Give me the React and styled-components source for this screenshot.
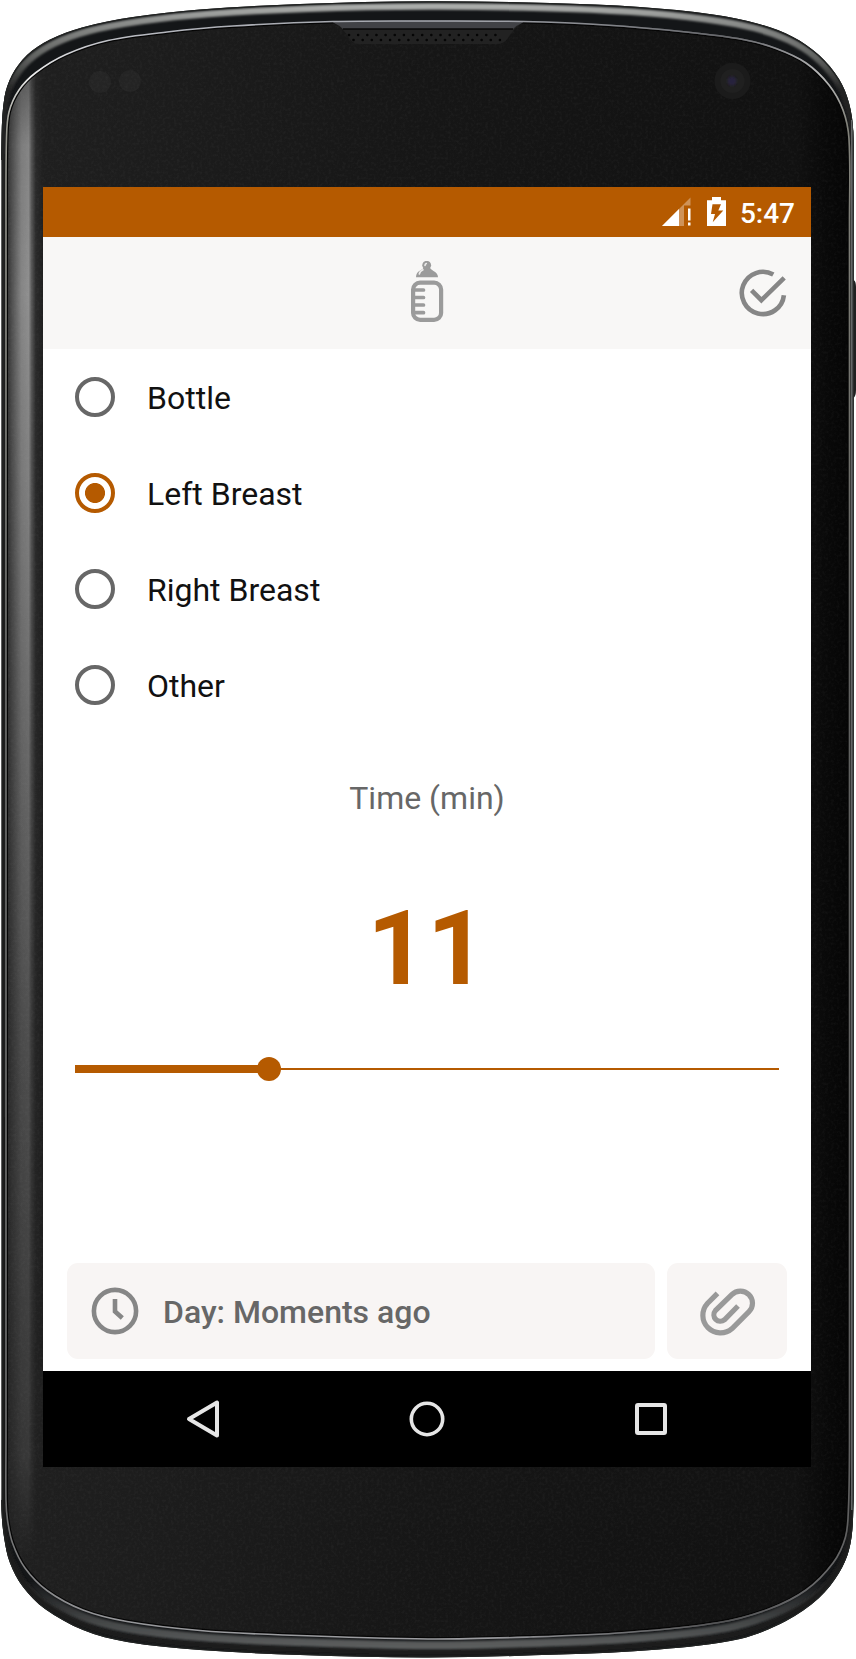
import React, { useState } from 'react';
import styled, { createGlobalStyle, ThemeProvider } from 'styled-components';

const theme = {
  accent: '#b55a00',
  bar: '#f8f7f6',
  card: '#f8f5f4',
  text: '#111111',
  muted: '#676767',
};

const GlobalStyle = createGlobalStyle`
  * { box-sizing: border-box; }
  body { margin: 0; background: #fff; font-family: Roboto, "Liberation Sans", sans-serif; }
`;

const Phone = styled.main`
  display: grid;
  width: 856px;
  height: 1659px;
  overflow: hidden;
`;

const FrameArt = styled.svg`
  grid-area: 1 / 1;
  display: block;
`;

const Screen = styled.section`
  grid-area: 1 / 1;
  z-index: 1;
  margin: 187px 0 0 43px;
  width: 768px;
  height: 1280px;
  display: flex;
  flex-direction: column;
  background: #fff;
`;

const StatusBar = styled.header`
  height: 50px;
  padding-right: 16px;
  display: flex;
  align-items: center;
  justify-content: flex-end;
  background: ${({ theme }) => theme.accent};
  color: #fff;
`;

const StatusIcons = styled.div`
  display: flex;
  gap: 16px;
`;

const Clock = styled.time`
  margin-left: 14px;
  font-size: 28px;
  font-weight: 500;
  line-height: 50px;
  padding-top: 3px;
`;

const AppBar = styled.div`
  height: 112px;
  display: grid;
  grid-template-columns: 96px 1fr 96px;
  align-items: center;
  justify-items: center;
  background: ${({ theme }) => theme.bar};
`;

const IconButton = styled.button`
  grid-column: ${({ $column }) => $column};
  display: flex;
  padding: 0;
  border: 0;
  background: none;
`;

const Content = styled.div`
  flex: 1;
  display: flex;
  flex-direction: column;
`;

const Option = styled.label`
  height: 96px;
  padding-left: 32px;
  display: flex;
  align-items: center;
  gap: 32px;
`;

const Radio = styled.input`
  appearance: none;
  flex: none;
  width: 40px;
  height: 40px;
  margin: 0;
  border: 4px solid #676767;
  border-radius: 50%;
  &:checked {
    border-color: ${({ theme }) => theme.accent};
    background: radial-gradient(circle, ${({ theme }) => theme.accent} 9.6px, transparent 10.4px);
  }
`;

const OptionText = styled.span`
  font-size: 32px;
  line-height: 38px;
  padding-top: 2px;
  color: ${({ theme }) => theme.text};
`;

const FieldLabel = styled.div`
  margin-top: 46px;
  text-align: center;
  font-size: 32px;
  line-height: 38px;
  color: ${({ theme }) => theme.muted};
`;

const Amount = styled.output`
  margin-top: 71px;
  text-align: center;
  font-size: 104px;
  line-height: 122px;
  font-weight: 700;
  color: ${({ theme }) => theme.accent};
`;

const Slider = styled.div`
  margin: 47px 32px 0;
  height: 24px;
  display: flex;
  align-items: center;
`;

const Filled = styled.div`
  height: 8px;
  background: ${({ theme }) => theme.accent};
`;

const Thumb = styled.div`
  width: 24px;
  height: 24px;
  margin: 0 -12px;
  border-radius: 50%;
  background: ${({ theme }) => theme.accent};
`;

const Rest = styled.div`
  flex: 1;
  height: 2px;
  background: ${({ theme }) => theme.accent};
`;

const Footer = styled.div`
  margin-top: auto;
  padding: 0 24px 12px;
  display: grid;
  grid-template-columns: 1fr 120px;
  gap: 12px;
`;

const Card = styled.button`
  height: 96px;
  padding: 0 24px;
  display: flex;
  align-items: center;
  justify-content: ${({ $center }) => ($center ? 'center' : 'flex-start')};
  gap: 24px;
  border: 0;
  border-radius: 11px;
  background: ${({ theme }) => theme.card};
  font: 500 32px/38px Roboto, "Liberation Sans", sans-serif;
  color: ${({ theme }) => theme.muted};
`;

const CardText = styled.span`
  padding-top: 2px;
`;

const NavBar = styled.nav`
  height: 96px;
  display: grid;
  grid-template-columns: repeat(3, 224px);
  justify-content: center;
  align-items: center;
  justify-items: center;
  background: #000;
`;

const lerp = (a, b, t) => a.map(([x, y], i) => [x + (b[i][0] - x) * t, y + (b[i][1] - y) * t]);

// Closed Catmull-Rom curve through the given points.
const curve = (pts) => {
  const n = pts.length;
  const at = (i) => pts[(i + n) % n];
  let d = `M${pts[0]}`;
  for (let i = 0; i < n; i++) {
    const [p0, p1, p2, p3] = [at(i - 1), at(i), at(i + 1), at(i + 2)];
    const len = Math.hypot(p2[0] - p1[0], p2[1] - p1[1]);
    const before = Math.hypot(p1[0] - p0[0], p1[1] - p0[1]);
    const after = Math.hypot(p3[0] - p2[0], p3[1] - p2[1]);
    const k1 = len / (before + len) / 3;
    const k2 = len / (after + len) / 3;
    const c1 = [p1[0] + (p2[0] - p0[0]) * k1, p1[1] + (p2[1] - p0[1]) * k1];
    const c2 = [p2[0] - (p3[0] - p1[0]) * k2, p2[1] - (p3[1] - p1[1]) * k2];
    d += `C${c1} ${c2} ${p2}`;
  }
  return `${d}Z`;
};

const outer = [
  [1.3, 800], [1.3, 220], [1.6, 135], [4.5, 97], [12, 75], [27, 55], [50, 39.5], [82, 27.5], [133, 17], [200, 9.5], [300, 4], [428, 1.3],
  [550, 3], [640, 7], [713, 14.5], [759, 24], [793, 37], [819, 55], [839, 79], [849, 103], [853.3, 132], [853.6, 220],
  [853.6, 800], [853.6, 1450], [853, 1520], [849, 1550], [839, 1573], [819, 1598], [786, 1621], [740, 1639], [659, 1649.5], [559, 1654.5], [428, 1657.5],
  [300, 1655], [200, 1650], [127, 1642], [83, 1630], [45, 1609], [23, 1587], [10, 1563], [4, 1537], [1.5, 1510], [1.3, 1450],
];
const inner = [
  [6, 800], [6, 220], [6.5, 139], [9, 112], [19, 90], [36, 72.5], [66, 54.5], [108, 40.5], [167, 32], [233, 26], [333, 21.5], [428, 21],
  [523, 21.5], [605, 25], [686, 32], [743, 39.5], [776, 48.5], [806, 63], [829, 85], [843, 110], [849, 139], [849.5, 220],
  [849.5, 800], [849.5, 1440], [848.5, 1507], [845.5, 1537], [833, 1563], [806, 1590], [769, 1609], [719, 1622.5], [626, 1632.5], [530, 1637], [428, 1639],
  [283, 1635], [200, 1630.5], [127, 1621.5], [83, 1610], [47, 1590.5], [25, 1568], [12.5, 1543], [7.5, 1520], [6, 1500], [6, 1440],
];

const outerPath = curve(outer);
const innerPath = curve(inner);
const sheenPath = curve(lerp(outer, inner, 0.27));
const undersidePath = curve(lerp(outer, inner, 0.66));

const meshDots = Array.from({ length: 17 }, (_, i) => [349 + i * 9.15, 35, 353.5 + i * 9.15, 40]);

function DeviceFrame() {
  return (
    <FrameArt width="856" height="1659" viewBox="0 0 856 1659" aria-hidden="true">
      <defs>
        <clipPath id="body"><path d={outerPath} /></clipPath>
        <clipPath id="glass"><path d={innerPath} /></clipPath>
        <linearGradient id="face" gradientUnits="userSpaceOnUse" x1="0" y1="0" x2="856" y2="0">
          <stop offset="0" stopColor="#202020" />
          <stop offset=".5" stopColor="#161616" />
          <stop offset=".93" stopColor="#111111" />
          <stop offset=".965" stopColor="#090909" />
          <stop offset="1" stopColor="#040404" />
        </linearGradient>
        <linearGradient id="edge" gradientUnits="userSpaceOnUse" x1="7" y1="0" x2="43" y2="0">
          <stop offset="0" stopColor="#303030" />
          <stop offset=".12" stopColor="#4d4d4d" />
          <stop offset=".4" stopColor="#868686" />
          <stop offset=".6" stopColor="#909090" />
          <stop offset=".68" stopColor="#5a5a5a" />
          <stop offset=".8" stopColor="#2b2b2b" />
          <stop offset="1" stopColor="#202020" />
        </linearGradient>
        <linearGradient id="fade" gradientUnits="userSpaceOnUse" x1="0" y1="70" x2="0" y2="1560">
          <stop offset="0" stopColor="#fff" stopOpacity=".5" />
          <stop offset=".05" stopColor="#fff" stopOpacity=".9" />
          <stop offset=".15" stopColor="#fff" />
          <stop offset=".35" stopColor="#fff" stopOpacity=".78" />
          <stop offset=".65" stopColor="#fff" stopOpacity=".42" />
          <stop offset=".93" stopColor="#fff" stopOpacity=".22" />
          <stop offset="1" stopColor="#fff" stopOpacity="0" />
        </linearGradient>
        <mask id="edgeMask"><rect width="60" height="1659" fill="url(#fade)" /></mask>
        <linearGradient id="sheen" gradientUnits="userSpaceOnUse" x1="0" y1="0" x2="0" y2="1659">
          <stop offset="0" stopColor="#b8bab8" />
          <stop offset=".012" stopColor="#8f918f" />
          <stop offset=".035" stopColor="#606260" />
          <stop offset=".055" stopColor="#222" />
          <stop offset="1" stopColor="#1a1a1a" />
        </linearGradient>
        <linearGradient id="underside" gradientUnits="userSpaceOnUse" x1="0" y1="1580" x2="0" y2="1655">
          <stop offset="0" stopColor="#555757" stopOpacity="0" />
          <stop offset=".6" stopColor="#555757" stopOpacity=".8" />
          <stop offset="1" stopColor="#646666" />
        </linearGradient>
        <linearGradient id="lip" gradientUnits="userSpaceOnUse" x1="0" y1="0" x2="0" y2="1659">
          <stop offset="0" stopColor="#8d9097" />
          <stop offset=".02" stopColor="#b6b8bf" />
          <stop offset=".045" stopColor="#eee" />
          <stop offset=".075" stopColor="#999990" />
          <stop offset=".2" stopColor="#8b8b84" />
          <stop offset=".4" stopColor="#70716f" />
          <stop offset=".92" stopColor="#707070" />
          <stop offset="1" stopColor="#a4a5a9" />
        </linearGradient>
        <linearGradient id="lipRight" x1="0" x2="1" y1="0" y2="0">
          <stop offset=".55" stopColor="#000" stopOpacity="0" />
          <stop offset=".85" stopColor="#000" stopOpacity=".45" />
          <stop offset="1" stopColor="#000" stopOpacity=".15" />
        </linearGradient>
        <filter id="grain" x="0" y="0" width="100%" height="100%">
          <feTurbulence type="fractalNoise" baseFrequency=".35" numOctaves="2" seed="4" />
          <feColorMatrix values="0 0 0 0 .5  0 0 0 0 .5  0 0 0 0 .5  .55 0 0 0 -.22" />
        </filter>
        <filter id="soft"><feGaussianBlur stdDeviation="1.2" /></filter>
      </defs>

      <path d="M852 280h1.5q2.5 1 2.5 7v103q0 6-2.5 8H852z" fill="#202020" />
      <path d={outerPath} fill="#141618" />
      <g clipPath="url(#body)">
        <path d={sheenPath} fill="none" stroke="url(#sheen)" strokeWidth="6.5" filter="url(#soft)" />
        <path d={undersidePath} fill="none" stroke="url(#underside)" strokeWidth="8" filter="url(#soft)" />
        <path d={outerPath} fill="none" stroke="#222423" strokeWidth="2.6" />
        <path d="M853.2 130V1500" stroke="#333" strokeWidth="1.5" />
        <path d="M851.8 120V1510" stroke="#777a7b" strokeWidth="1.2" />
        <path d="M1.5 160V1500" stroke="#777" strokeWidth="1" />
      </g>
      <path d={innerPath} fill="url(#face)" />
      <g clipPath="url(#glass)">
        <rect x="6" y="70" width="37" height="1500" fill="url(#edge)" mask="url(#edgeMask)" />
        <rect width="856" height="1659" filter="url(#grain)" opacity=".2" />
        <path d={innerPath} fill="none" stroke="#050505" strokeWidth="4" />
        <path d="M328 18h200l-6 5q-7 4-14 15-4 6-11 6H359q-6 0-10-6-7-11-14-15z" fill="#222" />
        <path d="M330 20h196l-4 3q-5 2-9 6H343q-4-4-9-6z" fill="#414246" />
        <path d="M343 29h170" stroke="#090909" strokeWidth="1.3" />
        {meshDots.map(([ax, ay, bx, by]) => (
          <g key={ax} fill="#050505">
            <circle cx={ax} cy={ay} r="1.3" />
            <circle cx={bx} cy={by} r="1.3" />
          </g>
        ))}
      </g>
      <path d={innerPath} fill="none" stroke="url(#lip)" strokeWidth="1.6" />
      <path d={innerPath} fill="none" stroke="url(#lipRight)" strokeWidth="1.6" />
      <circle cx="100" cy="82" r="11" fill="#fff" opacity=".03" />
      <circle cx="130" cy="81" r="11" fill="#fff" opacity=".03" />
      <circle cx="732.5" cy="81" r="18" fill="#1b1b1b" />
      <circle cx="732.5" cy="81" r="12" fill="#202020" />
      <circle cx="732" cy="81" r="4.5" fill="#26223e" filter="url(#soft)" />
    </FrameArt>
  );
}

const SignalIcon = () => (
  <svg width="29" height="30" viewBox="0 0 29 30" fill="#fff">
    <path d="M0 29 28.5.5V8.5H22V29z" opacity=".35" />
    <path d="M0 29 17 12V29z" />
    <path d="M26 11.5h2.500v12H26zM26 25.500h2.500v3H26z" />
  </svg>
);

const BatteryIcon = () => (
  <svg width="19" height="30" viewBox="0 0 19 30" fill="#fff">
    <path
      fillRule="evenodd"
      d="M5 0h9v3.300h5V29H0V3.300h5zM5.500 7.300 4 17h4l-2.300 8.300L16.300 13.500h-5l2.700-6.200z"
    />
  </svg>
);

const BottleIcon = () => (
  <svg width="36" height="64" viewBox="409 261 36 64" fill="#9b9b9b">
    <circle cx="426.700" cy="265.200" r="4.400" />
    <path d="M424 267h5.500q1 2.500 4 4 4.500 2.500 4.500 6.300H416q0-5 4.500-7 3-1.500 3.500-3.300z" />
    <path d="M419.300 274q.5-3 3.700-4.200M425 265.500q0-1.500 1.300-2" fill="none" stroke="#eeedec" strokeWidth="1.600" strokeLinecap="round" />
    <rect x="413.100" y="282.600" width="28" height="37.300" rx="7" fill="none" stroke="#9b9b9b" strokeWidth="4.200" />
    <path d="M414 290h9.500M414 297.500h9.500M414 305h9.500M414 312.700h9.500" stroke="#9b9b9b" strokeWidth="3.700" strokeLinecap="round" />
  </svg>
);

const DoneIcon = () => (
  <svg width="48" height="48" viewBox="739 269 48 48" fill="none" stroke="#868686" strokeWidth="4.600">
    <path d="M783.900 295.200A21.100 21.100 0 1 1 773.300 274.600" />
    <path d="m751.600 290.300 9.800 9.900 22.800-22.300" />
  </svg>
);

const ClockIcon = () => (
  <svg width="48" height="48" viewBox="0 0 48 48" fill="none" stroke="#868686" strokeWidth="4.600">
    <circle cx="24" cy="24" r="21.100" />
    <path d="M24 12v12.500l7.300 6.500" />
  </svg>
);

const ClipIcon = () => (
  <svg width="60" height="52" viewBox="697.500 1285 60 52" fill="none" stroke="#999" strokeWidth="5.200">
    <path d="M718 1293.300 707.900 1303.500A17.600 17.600 0 0 0 732.600 1328.500L749.500 1311.700A12 12 0 0 0 732.300 1294.700L715.900 1310.600A6.500 6.500 0 0 0 725 1319.800L738.500 1306" />
  </svg>
);

const BackIcon = () => (
  <svg width="36" height="40" viewBox="0 0 36 40" fill="none" stroke="#e6e6e6" strokeWidth="4" strokeLinejoin="round">
    <path d="M32 3.500V36.500L4 20z" />
  </svg>
);

const HomeIcon = () => (
  <svg width="40" height="40" viewBox="0 0 40 40" fill="none" stroke="#e6e6e6" strokeWidth="3.600">
    <circle cx="20" cy="20" r="15.700" />
  </svg>
);

const RecentIcon = () => (
  <svg width="32" height="32" viewBox="0 0 32 32" fill="none" stroke="#e6e6e6" strokeWidth="4">
    <rect x="2" y="2" width="28" height="28" rx="1" />
  </svg>
);

const options = ['Bottle', 'Left Breast', 'Right Breast', 'Other'];
const minutes = 11;
const maxMinutes = 40;

export default function App() {
  const [selected, setSelected] = useState('Left Breast');
  return (
    <ThemeProvider theme={theme}>
      <GlobalStyle />
      <Phone>
        <DeviceFrame />
        <Screen>
          <StatusBar>
            <StatusIcons>
              <SignalIcon />
              <BatteryIcon />
            </StatusIcons>
            <Clock>5:47</Clock>
          </StatusBar>
          <AppBar>
            <IconButton $column={2} aria-label="Feeding"><BottleIcon /></IconButton>
            <IconButton $column={3} aria-label="Save"><DoneIcon /></IconButton>
          </AppBar>
          <Content>
            {options.map((name) => (
              <Option key={name}>
                <Radio type="radio" name="kind" checked={selected === name} onChange={() => setSelected(name)} />
                <OptionText>{name}</OptionText>
              </Option>
            ))}
            <FieldLabel>Time (min)</FieldLabel>
            <Amount>{minutes}</Amount>
            <Slider>
              <Filled style={{ width: `${(minutes / maxMinutes) * 100}%` }} />
              <Thumb />
              <Rest />
            </Slider>
            <Footer>
              <Card>
                <ClockIcon />
                <CardText>Day: Moments ago</CardText>
              </Card>
              <Card $center aria-label="Attach"><ClipIcon /></Card>
            </Footer>
          </Content>
          <NavBar>
            <BackIcon />
            <HomeIcon />
            <RecentIcon />
          </NavBar>
        </Screen>
      </Phone>
    </ThemeProvider>
  );
}
